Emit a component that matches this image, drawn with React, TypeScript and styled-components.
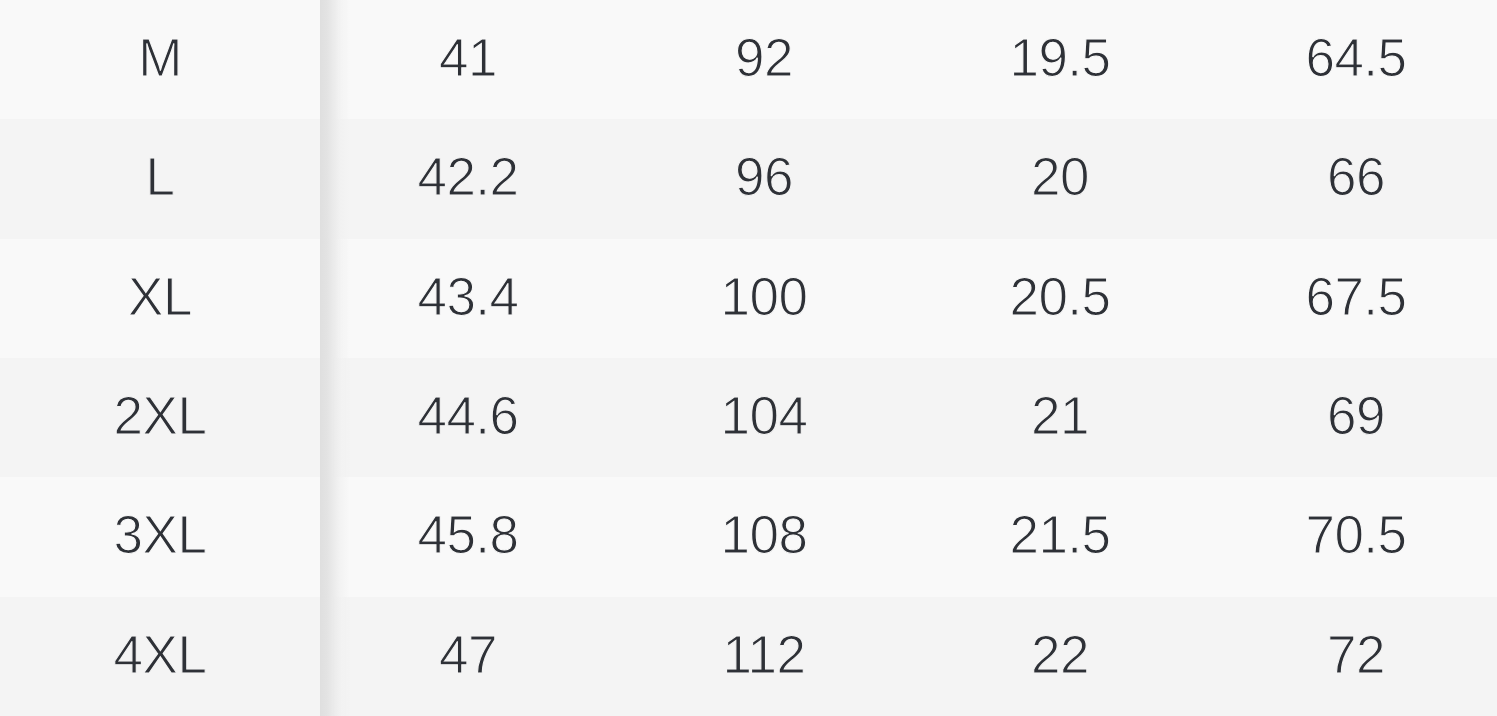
import styled, { createGlobalStyle } from 'styled-components';

const rows = [
  ['M', '41', '92', '19.5', '64.5'],
  ['L', '42.2', '96', '20', '66'],
  ['XL', '43.4', '100', '20.5', '67.5'],
  ['2XL', '44.6', '104', '21', '69'],
  ['3XL', '45.8', '108', '21.5', '70.5'],
  ['4XL', '47', '112', '22', '72'],
];

const GlobalStyle = createGlobalStyle`
  html, body {
    margin: 0;
    padding: 0;
    overflow: hidden;
    background: #f9f9f9;
  }
`;

export default function App() {
  return (
    <>
      <GlobalStyle />
      <SizeTable>
        {rows.map((row, i) => (
          <Row key={row[0]} $striped={i % 2 === 1}>
            {row.map((value, j) => (
              <Cell key={j}>{value}</Cell>
            ))}
          </Row>
        ))}
      </SizeTable>
    </>
  );
}

const SizeTable = styled.div`
  display: grid;
  grid-template-rows: repeat(6, 1fr);
  height: 716px;
  width: 1497px;
  overflow: hidden;
  font-family: 'Liberation Sans', Arial, sans-serif;
`;

const Row = styled.div<{ $striped: boolean }>`
  --row-bg: ${(p) => (p.$striped ? '#f4f4f4' : '#f9f9f9')};
  display: grid;
  grid-template-columns: 320px repeat(4, 296px);
  align-items: center;
  background:
    linear-gradient(
      to right,
      transparent 320px,
      #dfdfdf 320px,
      #e3e3e3 327px,
      #e9e9e9 332px,
      rgba(240, 240, 240, 0.7) 340px,
      transparent 350px
    ),
    var(--row-bg);
`;

/* the bg-coloured stroke thins the glyphs down to a light weight */
const Cell = styled.div`
  text-align: center;
  font-size: 53px;
  font-weight: 400;
  color: #2e3137;
  letter-spacing: -0.5px;
  padding-bottom: 4px;
  -webkit-text-stroke: 1.1px var(--row-bg);
`;
